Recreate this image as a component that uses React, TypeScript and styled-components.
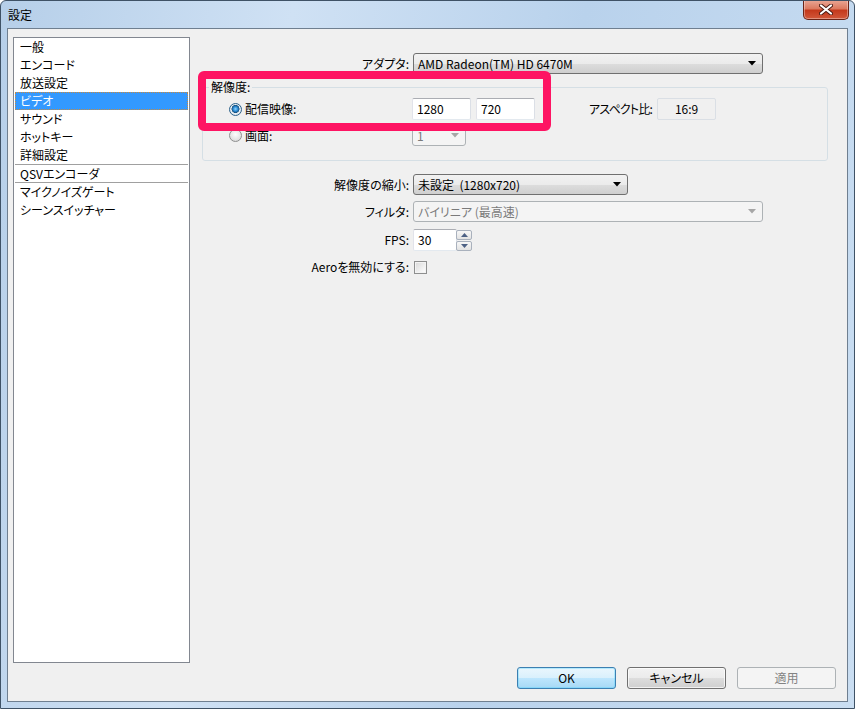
import React from 'react';
import styled, { createGlobalStyle, css } from 'styled-components';

const GlobalStyle = createGlobalStyle`
  html, body {
    margin: 0;
    padding: 0;
  }
  body {
    font-family: "Noto Sans CJK JP", "Noto Sans", sans-serif;
    font-size: 12px;
    font-feature-settings: "palt";
    color: #000;
    background: #fff;
  }
  * {
    box-sizing: border-box;
  }
`;

const categories = [
  { name: '一般' },
  { name: 'エンコード' },
  { name: '放送設定' },
  { name: 'ビデオ', selected: true },
  { name: 'サウンド' },
  { name: 'ホットキー' },
  { name: '詳細設定' },
  { name: 'QSVエンコーダ', divider: true },
  { name: 'マイクノイズゲート' },
  { name: 'シーンスイッチャー' },
];

function DropArrow({ disabled }: { disabled?: boolean }) {
  return (
    <svg width="8" height="5" viewBox="0 0 8 5">
      <path d="M0 0 H8 L4 4.5 Z" fill={disabled ? '#a6a6a6' : '#000'} />
    </svg>
  );
}

function ComboBox({ value, width, disabled }: { value: string; width: number; disabled?: boolean }) {
  return (
    <Combo $w={width} $disabled={disabled}>
      <ComboText>{value}</ComboText>
      <DropArrow disabled={disabled} />
    </Combo>
  );
}

export default function App() {
  return (
    <>
      <GlobalStyle />
      <Window>
        <TitleBar>
          <Title>設定</Title>
          <CloseButton>
            <svg width="14" height="11" viewBox="0 0 14 11">
              <path d="M2 1.5 L12 9.5 M12 1.5 L2 9.5" stroke="#4a1a12" strokeWidth="4" strokeLinecap="round" />
              <path d="M2 1.5 L12 9.5 M12 1.5 L2 9.5" stroke="#fff" strokeWidth="2.2" strokeLinecap="round" />
            </svg>
          </CloseButton>
        </TitleBar>

        <Client>
          <Body>
            <CategoryList>
              {categories.map((c) => (
                <CategoryItem key={c.name} $selected={c.selected} $divider={c.divider}>
                  {c.name}
                </CategoryItem>
              ))}
            </CategoryList>

            <MainPanel>
              <FormRow $mt={0} $h={21}>
                <FieldLabel>アダプタ:</FieldLabel>
                <ComboBox value="AMD Radeon(TM) HD 6470M" width={350} />
              </FormRow>

              <Group>
                <Legend>解像度:</Legend>
                <GroupRow $h={22}>
                  <RadioCell>
                    <Radio $checked />
                    配信映像:
                  </RadioCell>
                  <TextBox $w={59}>1280</TextBox>
                  <TextBox $w={59}>720</TextBox>
                  <AspectLabel>アスペクト比:</AspectLabel>
                  <AspectBox>16:9</AspectBox>
                </GroupRow>
                <GroupRow $h={21}>
                  <RadioCell>
                    <Radio />
                    画面:
                  </RadioCell>
                  <ComboBox value="1" width={54} disabled />
                </GroupRow>
              </Group>

              <FormRow $mt={13} $h={21}>
                <FieldLabel>解像度の縮小:</FieldLabel>
                <ComboBox value="未設定  (1280x720)" width={215} />
              </FormRow>

              <FormRow $mt={6} $h={21}>
                <FieldLabel>フィルタ:</FieldLabel>
                <ComboBox value="バイリニア (最高速)" width={350} disabled />
              </FormRow>

              <FormRow $mt={7} $h={22}>
                <FieldLabel>FPS:</FieldLabel>
                <SpinWrap>
                  <TextBox $w={44}>30</TextBox>
                  <SpinButtons>
                    <SpinButton>
                      <svg width="7" height="4" viewBox="0 0 7 4">
                        <path d="M0 4 H7 L3.5 0 Z" fill="#4d6185" />
                      </svg>
                    </SpinButton>
                    <SpinButton>
                      <svg width="7" height="4" viewBox="0 0 7 4">
                        <path d="M0 0 H7 L3.5 4 Z" fill="#4d6185" />
                      </svg>
                    </SpinButton>
                  </SpinButtons>
                </SpinWrap>
              </FormRow>

              <FormRow $mt={8} $h={16}>
                <FieldLabel>Aeroを無効にする:</FieldLabel>
                <CheckBox />
              </FormRow>

              <Highlight />
            </MainPanel>
          </Body>

          <ButtonBar>
            <DialogButton $variant="default">OK</DialogButton>
            <DialogButton>キャンセル</DialogButton>
            <DialogButton $variant="disabled">適用</DialogButton>
          </ButtonBar>
        </Client>
      </Window>
    </>
  );
}

const Window = styled.div`
  width: 855px;
  height: 709px;
  display: flex;
  flex-direction: column;
  background: linear-gradient(100deg, #b6cfe9 0%, #cfe1f4 30%, #b9d2ec 60%, #cadef2 100%);
  border: 1px solid #3f5266;
  border-radius: 6px 6px 0 0;
  overflow: hidden;
`;

const TitleBar = styled.div`
  height: 28px;
  display: flex;
  align-items: flex-start;
  justify-content: space-between;
  padding: 0 5px 0 7px;
`;

const Title = styled.div`
  font-size: 12px;
  line-height: 14px;
  margin-top: 7px;
  color: #000;
`;

const CloseButton = styled.div`
  width: 46px;
  height: 20px;
  margin-top: -1px;
  display: flex;
  align-items: center;
  justify-content: center;
  border: 1px solid #6b2417;
  border-top: none;
  border-radius: 0 0 5px 5px;
  background: linear-gradient(#e9a897 0%, #dc7a60 45%, #c4391c 55%, #d2583a 100%);
  box-shadow: inset 0 0 0 1px rgba(255, 255, 255, 0.35);
`;

const Client = styled.div`
  flex: 1;
  margin: 0 6px 6px 6px;
  display: flex;
  flex-direction: column;
  background: #f0f0f0;
  border: 1px solid #6f7f90;
  padding: 8px 11px 12px 5px;
`;

const Body = styled.div`
  display: flex;
  height: 626px;
`;

const CategoryList = styled.div`
  width: 177px;
  height: 100%;
  background: #fff;
  border: 1px solid #828790;
  padding: 0;
`;

const CategoryItem = styled.div<{ $selected?: boolean; $divider?: boolean }>`
  height: 18px;
  margin: 0 1px;
  padding-left: 5px;
  line-height: 18px;
  font-size: 12px;
  white-space: nowrap;
  ${(p) =>
    p.$selected &&
    css`
      background: #3399ff;
      color: #fff;
      outline: 1px dotted #c98a3e;
      outline-offset: -1px;
    `}
  ${(p) =>
    p.$divider &&
    css`
      height: 19px;
      line-height: 17px;
      border-top: 1px solid #a0a0a0;
      border-bottom: 1px solid #a0a0a0;
    `}
`;

const MainPanel = styled.div`
  position: relative;
  flex: 1;
  display: flex;
  flex-direction: column;
  padding: 16px 8px 0 12px;
`;

const FormRow = styled.div<{ $mt: number; $h: number }>`
  display: flex;
  align-items: center;
  gap: 4px;
  margin-top: ${(p) => p.$mt}px;
  height: ${(p) => p.$h}px;
`;

const FieldLabel = styled.div`
  width: 207px;
  text-align: right;
  white-space: nowrap;
  line-height: 14px;
`;

const Combo = styled.div<{ $w: number; $disabled?: boolean }>`
  width: ${(p) => p.$w}px;
  height: 21px;
  display: flex;
  align-items: center;
  justify-content: space-between;
  padding: 0 6px 0 4px;
  border-radius: 3px;
  ${(p) =>
    p.$disabled
      ? css`
          border: 1px solid #adb2b5;
          background: #f4f4f4;
          color: #7a7a7a;
        `
      : css`
          border: 1px solid #707070;
          background: linear-gradient(#f2f2f2 0%, #ebebeb 50%, #dddddd 50%, #cfcfcf 100%);
          color: #000;
        `}
`;

const ComboText = styled.span`
  white-space: pre;
  line-height: 14px;
`;

const Group = styled.div`
  position: relative;
  margin-top: 13px;
  height: 74px;
  border: 1px solid #d5dfe5;
  border-radius: 3px;
  padding: 10px 0 0 0;
  display: flex;
  flex-direction: column;
  gap: 5px;
`;

const Legend = styled.span`
  position: absolute;
  left: 6px;
  top: -8px;
  padding: 0 2px;
  background: #f0f0f0;
  line-height: 14px;
`;

const GroupRow = styled.div<{ $h: number }>`
  display: flex;
  align-items: center;
  height: ${(p) => p.$h}px;
`;

const RadioCell = styled.div`
  width: 209px;
  display: flex;
  align-items: center;
  gap: 3px;
  padding-left: 26px;
  line-height: 14px;
`;

const Radio = styled.span<{ $checked?: boolean }>`
  width: 13px;
  height: 13px;
  border-radius: 50%;
  flex-shrink: 0;
  border: 1px solid ${(p) => (p.$checked ? '#2c628b' : '#8e8f8f')};
  background: ${(p) =>
    p.$checked
      ? 'radial-gradient(circle at 50% 45%, #8fd6ff 0%, #2a8ad4 28%, #17507e 46%, #e8eef3 52%, #d7dde3 100%)'
      : 'radial-gradient(circle at 50% 40%, #fdfdfd 0%, #e4e4e4 60%, #cfcfcf 100%)'};
`;

const TextBox = styled.div<{ $w: number }>`
  width: ${(p) => p.$w}px;
  height: 22px;
  margin-right: 5px;
  display: flex;
  align-items: center;
  padding-left: 4px;
  background: #fff;
  border: 1px solid;
  border-color: #abadb3 #dbdfe6 #e3e9ef #e2e3ea;
  border-radius: 2px;
  line-height: 14px;
`;

const AspectLabel = styled.div`
  margin: 0 5px 0 49px;
  letter-spacing: -0.8px;
  line-height: 14px;
  white-space: nowrap;
  flex-shrink: 0;
`;

const AspectBox = styled.div`
  width: 59px;
  height: 22px;
  display: flex;
  align-items: center;
  justify-content: center;
  background: #f0f0f0;
  border: 1px solid #dadfe5;
  border-radius: 2px;
  line-height: 14px;
`;

const SpinWrap = styled.div`
  display: flex;
  align-items: center;
  height: 22px;
`;

const SpinButtons = styled.div`
  display: flex;
  flex-direction: column;
  gap: 1px;
  margin-left: -6px;
`;

const SpinButton = styled.div`
  width: 16px;
  height: 10px;
  display: flex;
  align-items: center;
  justify-content: center;
  border: 1px solid #a9b1bd;
  border-radius: 2px;
  background: linear-gradient(#f7f7f7, #e3e3e3);
`;

const CheckBox = styled.span`
  width: 13px;
  height: 13px;
  margin-left: 1px;
  border: 1px solid #8e8f8f;
  background: linear-gradient(135deg, #d8d8d8 0%, #f4f4f4 70%, #ffffff 100%);
  box-shadow: inset 0 0 0 1px #f3f3f3;
`;

const Highlight = styled.div`
  position: absolute;
  left: 8px;
  top: 34px;
  width: 353px;
  height: 60px;
  border: 8px solid #fe1463;
  border-radius: 6px;
  pointer-events: none;
`;

const ButtonBar = styled.div`
  display: flex;
  justify-content: flex-end;
  gap: 11px;
  margin-top: 4px;
`;

const DialogButton = styled.div<{ $variant?: 'default' | 'disabled' }>`
  width: 99px;
  height: 22px;
  display: flex;
  align-items: center;
  justify-content: center;
  border-radius: 3px;
  line-height: 14px;
  border: 1px solid #707070;
  background: linear-gradient(#f2f2f2 0%, #ebebeb 50%, #dddddd 50%, #cfcfcf 100%);
  box-shadow: inset 0 0 0 1px rgba(255, 255, 255, 0.7);
  ${(p) =>
    p.$variant === 'default' &&
    css`
      border-color: #3c7fb1;
      background: linear-gradient(#eaf6fd 0%, #d9f0fc 50%, #bee6fd 50%, #a7d9f5 100%);
      box-shadow: inset 0 0 0 1px #48d2ff55;
    `}
  ${(p) =>
    p.$variant === 'disabled' &&
    css`
      border-color: #adb2b5;
      background: #f4f4f4;
      color: #838383;
      box-shadow: none;
    `}
`;
